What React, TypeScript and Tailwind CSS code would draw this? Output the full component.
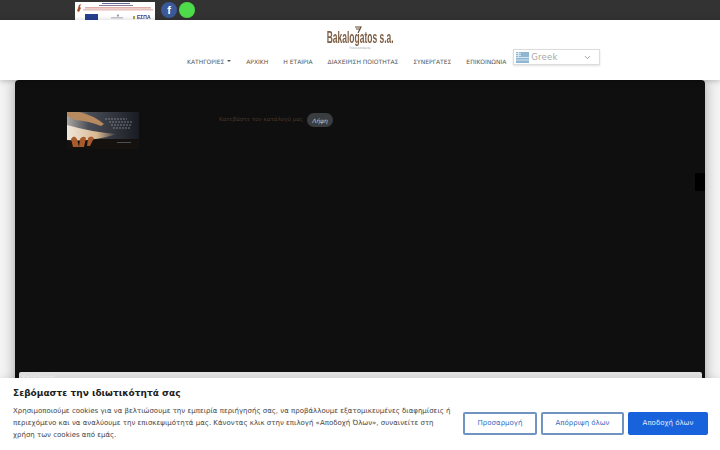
import { ChevronDown } from 'lucide-react';

const navItems = ['ΑΡΧΙΚΗ', 'Η ΕΤΑΙΡΙΑ', 'ΔΙΑΧΕΙΡΙΣΗ ΠΟΙΟΤΗΤΑΣ', 'ΣΥΝΕΡΓΑΤΕΣ', 'ΕΠΙΚΟΙΝΩΝΙΑ'];

function EspaBanner() {
  return (
    <svg width="80" height="18" viewBox="0 0 80 18" className="block bg-white blur-[0.3px]">
      <path d="M2 9l2-6 2-1-1 3 1 1-2 4z" fill="#a5502a" />
      <rect x="27" y="1" width="28" height="1" fill="#6a6a9a" />
      <rect x="24" y="3" width="34" height="1" fill="#8a7a9a" />
      <rect x="10" y="5.5" width="66" height="0.8" fill="#c0605a" />
      <rect x="8" y="7.5" width="70" height="0.8" fill="#d08a80" />
      <rect x="10" y="12" width="13" height="6" fill="#24408f" />
      <rect x="36" y="15" width="12" height="1.5" fill="#c8c8d0" />
      <rect x="42" y="12.5" width="2" height="2" fill="#9aa0b0" />
      <rect x="58" y="14" width="2" height="3" fill="#b5a040" />
      <text x="62" y="17" fontSize="5" fontWeight="700" fill="#28408a" fontFamily="Liberation Sans, sans-serif">ΕΣΠΑ</text>
    </svg>
  );
}

function CatalogImage() {
  return (
    <svg width="72" height="37" viewBox="0 0 72 37" className="block blur-[0.4px]">
      <defs>
        <linearGradient id="sky" x1="0" y1="0" x2="1" y2="0">
          <stop offset="0" stopColor="#a9a6a2" />
          <stop offset="0.3" stopColor="#4a4d56" />
          <stop offset="1" stopColor="#181c22" />
        </linearGradient>
        <linearGradient id="beam" x1="0" y1="0" x2="1" y2="0">
          <stop offset="0" stopColor="#f0e8dc" />
          <stop offset="0.6" stopColor="#d8b890" />
          <stop offset="1" stopColor="#d8b890" stopOpacity="0" />
        </linearGradient>
      </defs>
      <rect width="72" height="37" fill="url(#sky)" />
      <rect y="27" width="72" height="10" fill="#14110e" />
      <path d="M0 13 Q24 20 50 22 Q26 30 0 28z" fill="url(#beam)" />
      <path d="M0 0h12q14 3 25 12l-3 2Q22 9 8 8L0 4z" fill="#b88a60" />
      <path d="M4 27q3-5 6 0l2 8H6zM13 27q3-4 6-1l-2 9h-5zM21 26q3-3 6 0l-4 8h-3z" fill="#a85a2c" />
      <path d="M38 7h22M42 10h24M44 13h20M46 16h18" stroke="#b0b4ba" strokeWidth="0.6" strokeDasharray="2 1" />
      <rect x="50" y="30" width="14" height="1" fill="#4a5058" />
    </svg>
  );
}

export default function App() {
  return (
    <div className="relative flex h-[450px] w-[720px] flex-col overflow-hidden bg-[#f4f4f4] font-['DejaVu_Sans',sans-serif]">
      {/* top bar */}
      <div className="flex h-5 shrink-0 items-start bg-[#333333] pl-[75px] pt-[2px]">
        <EspaBanner />
        <span className="ml-[6px] flex h-4 w-4 items-center justify-center rounded-full bg-[#3b5998] text-[11px] font-bold leading-none text-white font-['Liberation_Sans',sans-serif]">
          f
        </span>
        <span className="ml-[2px] h-4 w-4 rounded-full bg-[#4fdc4a]" />
      </div>

      {/* header */}
      <header className="relative z-10 h-[60px] shrink-0 bg-white shadow-[0_1px_6px_rgba(0,0,0,0.25)]">
        <div className="flex h-[30px] flex-col items-center justify-end">
          <svg width="8" height="7" viewBox="0 0 8 7" className="mb-[-2px] ml-[-4px]">
            <path d="M1 1h6L4 7M2 3h4" fill="none" stroke="#5f4630" strokeWidth="1.1" />
          </svg>
          <div className="mb-[2px] scale-x-[0.53] whitespace-nowrap text-[16px] font-bold leading-[14px] text-[#7d5f46] font-['Liberation_Sans',sans-serif]">
            Bakalogatos s.a.
          </div>
          <div className="text-[3px] leading-[3px] text-[#999999]">Food products</div>
        </div>
        <nav className="flex h-[22px] items-center pl-[187px] text-[6px] text-[#555555]">
          <span className="flex items-center">
            ΚΑΤΗΓΟΡΙΕΣ
            <span className="ml-[3px] h-0 w-0 border-x-[2px] border-t-[2px] border-x-transparent border-t-[#555555]" />
          </span>
          {navItems.map((item) => (
            <span key={item} className="ml-[15px]">
              {item}
            </span>
          ))}
          <div className="mb-[8px] ml-[7px] flex h-4 w-[87px] items-center border border-[#dcdcdc] bg-white pl-[2px] pr-[7px] shadow-[0_1px_2px_rgba(0,0,0,0.12)]">
            <svg width="13" height="11" viewBox="0 0 13 11" className="shrink-0">
              <rect width="13" height="11" fill="#8fb6d2" />
              <path d="M0 1.5h5M0 3.5h5M2.5 0v5M0 5.5h13M0 8h13" stroke="#e6eff5" strokeWidth="0.8" />
            </svg>
            <span className="ml-[2px] text-[8.5px] leading-none tracking-[0.2px] text-[#a8a8a8]">Greek</span>
            <ChevronDown size={9} strokeWidth={1.6} className="ml-auto text-[#666666]" />
          </div>
        </nav>
      </header>

      {/* dark card */}
      <main className="mx-[15px] flex flex-1 flex-col justify-between rounded-t-[4px] bg-[#0f0f0f] shadow-[0_0_14px_rgba(0,0,0,0.35)]">
        <div className="relative">
          <div className="flex items-start pl-[52px] pt-[32px]">
            <CatalogImage />
            <p className="ml-[80px] mt-[4px] w-[84px] whitespace-nowrap text-[5.6px] leading-[7px] text-[#4a3628]">Κατεβάστε τον κατάλογό μας</p>
            <button className="ml-[4px] mt-px h-[14px] w-[26px] rounded-full bg-[#3a3d40] text-[6px] italic text-[#c8c8c8]">
              Λήψη
            </button>
          </div>
          <div className="absolute right-0 top-[93px] h-[18px] w-[10px] bg-black" />
        </div>
        <div className="mx-1 mr-[3px] h-[78px] rounded-t-[2px] bg-[#e2e2e2] pl-[3px] pt-[1px] text-[6px] leading-[8px] text-[#f6f6f6]">
          Κατάλογος
        </div>
      </main>

      {/* cookie banner */}
      <section className="absolute bottom-0 left-0 flex h-[72px] w-full items-start justify-between bg-white pl-[13px] pr-[12px] shadow-[0_-1px_6px_rgba(0,0,0,0.08)]">
        <div className="w-[440px]">
          <h2 className="mt-[8px] text-[9px] font-bold leading-[14px] text-[#212121]">
            Σεβόμαστε την ιδιωτικότητά σας
          </h2>
          <p className="mt-[5px] text-[7px] leading-[12px] text-[#444444]">
            Χρησιμοποιούμε cookies για να βελτιώσουμε την εμπειρία περιήγησής σας, να προβάλλουμε εξατομικευμένες διαφημίσεις ή περιεχόμενο και να αναλύουμε την επισκεψιμότητά μας. Κάνοντας κλικ στην επιλογή «Αποδοχή Όλων», συναινείτε στη χρήση των cookies από εμάς.
          </p>
        </div>
        <div className="mt-[34px] flex gap-1 text-[7px]">
          <button className="h-[23px] w-[74px] rounded-[2px] border-2 border-[#6f94c0] bg-white text-[#2f6cc0]">Προσαρμογή</button>
          <button className="h-[23px] w-[83px] rounded-[2px] border-2 border-[#6f94c0] bg-white text-[#2f6cc0]">Απόρριψη όλων</button>
          <button className="h-[23px] w-[80px] rounded-[2px] bg-[#1863dc] text-[#e4ecfa]">Αποδοχή όλων</button>
        </div>
      </section>
    </div>
  );
}
